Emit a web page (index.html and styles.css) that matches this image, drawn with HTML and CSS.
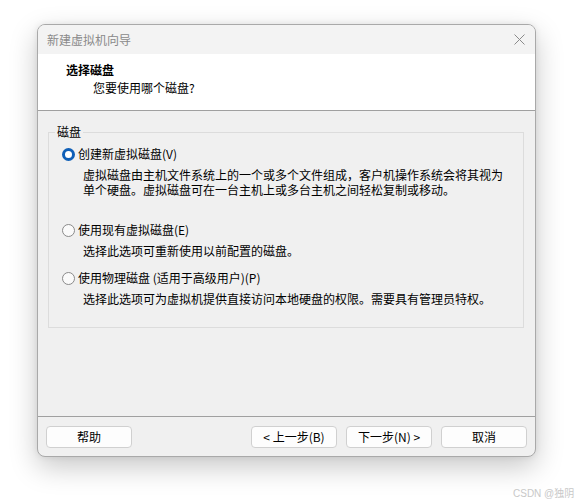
FILE: index.html
```html
<!DOCTYPE html>
<html lang="zh-CN">
<head>
<meta charset="utf-8">
<link rel="stylesheet" href="styles.css">
</head>
<body>
<div class="window">
  <div class="titlebar">
    <span class="title">新建虚拟机向导</span>
    <svg class="close" width="11" height="11" viewBox="0 0 11 11"><path d="M0.5 0.5L10.5 10.5M10.5 0.5L0.5 10.5" stroke="#8a8a8a" stroke-width="1" fill="none"/></svg>
  </div>
  <div class="header">
    <div class="h-title">选择磁盘</div>
    <div class="h-sub">您要使用哪个磁盘?</div>
  </div>
  <div class="main">
    <fieldset class="group">
      <legend>磁盘</legend>
      <div class="option first">
        <div class="opt-label"><span class="radio checked"></span>创建新虚拟磁盘(V)</div>
        <div class="opt-desc">
          <div class="desc-line">虚拟磁盘由主机文件系统上的一个或多个文件组成，客户机操作系统会将其视为</div>
          <div class="desc-line">单个硬盘。虚拟磁盘可在一台主机上或多台主机之间轻松复制或移动。</div>
        </div>
      </div>
      <div class="option second">
        <div class="opt-label"><span class="radio"></span>使用现有虚拟磁盘(E)</div>
        <div class="opt-desc"><div class="desc-line">选择此选项可重新使用以前配置的磁盘。</div></div>
      </div>
      <div class="option">
        <div class="opt-label"><span class="radio"></span>使用物理磁盘 (适用于高级用户)(P)</div>
        <div class="opt-desc"><div class="desc-line">选择此选项可为虚拟机提供直接访问本地硬盘的权限。需要具有管理员特权。</div></div>
      </div>
    </fieldset>
  </div>
  <div class="footer">
    <button class="btn">帮助</button>
    <div class="spacer"></div>
    <button class="btn">&lt; 上一步(B)</button>
    <button class="btn">下一步(N) &gt;</button>
    <button class="btn">取消</button>
  </div>
</div>
<div class="watermark">CSDN @独阴</div>
</body>
</html>
```

FILE: styles.css
```css
* { box-sizing: border-box; }
html, body { margin: 0; padding: 0; }
body {
  width: 578px;
  height: 503px;
  background: #ffffff;
  font-family: "Noto Sans CJK SC", "Noto Sans", sans-serif;
  font-size: 12px;
  color: #000;
  padding: 24px 0 0 37px;
  overflow: hidden;
  position: relative;
}
.window {
  width: 499px;
  height: 433px;
  border: 1px solid #a9a9a9;
  border-radius: 8px;
  background: #f0f0f0;
  box-shadow: 0 10px 28px rgba(0,0,0,0.22), 0 0 6px rgba(0,0,0,0.08);
  display: flex;
  flex-direction: column;
  overflow: hidden;
}
.titlebar {
  height: 29px;
  background: #f3f3f3;
  display: flex;
  align-items: center;
  padding: 0 10px 0 9px;
  flex-shrink: 0;
}
.title {
  color: #8a8a8a;
  font-size: 12px;
  line-height: 16px;
  flex: 1;
}
.close { display: block; }
.header {
  height: 57px;
  background: #ffffff;
  border-bottom: 1px solid #a0a0a0;
  padding: 8px 0 0 28px;
  flex-shrink: 0;
}
.h-title {
  font-weight: bold;
  line-height: 16px;
}
.h-sub {
  line-height: 16px;
  margin-top: 2px;
  padding-left: 27px;
}
.main {
  flex: 1;
  padding: 13px 11px 0 10px;
}
.group {
  margin: 0;
  border: 1px solid #dcdcdc;
  padding: 6px 12px 21px 13px;
  min-width: 0;
}
.group legend {
  padding: 0 2px;
  margin-left: -7px;
  line-height: 16px;
}
.option.first { margin-bottom: 25px; }
.option.second { margin-bottom: 12px; }
.opt-label {
  display: flex;
  align-items: center;
  line-height: 16px;
  height: 16px;
}
.radio {
  width: 13px;
  height: 13px;
  border-radius: 50%;
  border: 1px solid #8a8a8a;
  background: #fafafa;
  margin-right: 3px;
  flex-shrink: 0;
}
.radio.checked {
  border: 3.5px solid #0f5fb7;
  background: #ffffff;
}
.opt-desc {
  margin-top: 5px;
  padding-left: 21px;
}
.desc-line {
  height: 15px;
  line-height: 15px;
  white-space: nowrap;
}
.footer {
  height: 40px;
  border-top: 1px solid #a0a0a0;
  padding: 9px 8px 0 8px;
  display: flex;
  gap: 9px;
  flex-shrink: 0;
}
.spacer { flex: 1; }
.btn {
  width: 86px;
  height: 22px;
  background: #fdfdfd;
  border: 1px solid #d0d0d0;
  border-radius: 4px;
  font-family: inherit;
  font-size: 12px;
  color: #000;
  padding: 0;
  line-height: 20px;
}
.watermark {
  position: absolute;
  left: 513px;
  top: 485px;
  font-size: 10px;
  color: #c8c8c8;
  font-family: "Liberation Sans", "Noto Sans CJK SC", sans-serif;
}
```
